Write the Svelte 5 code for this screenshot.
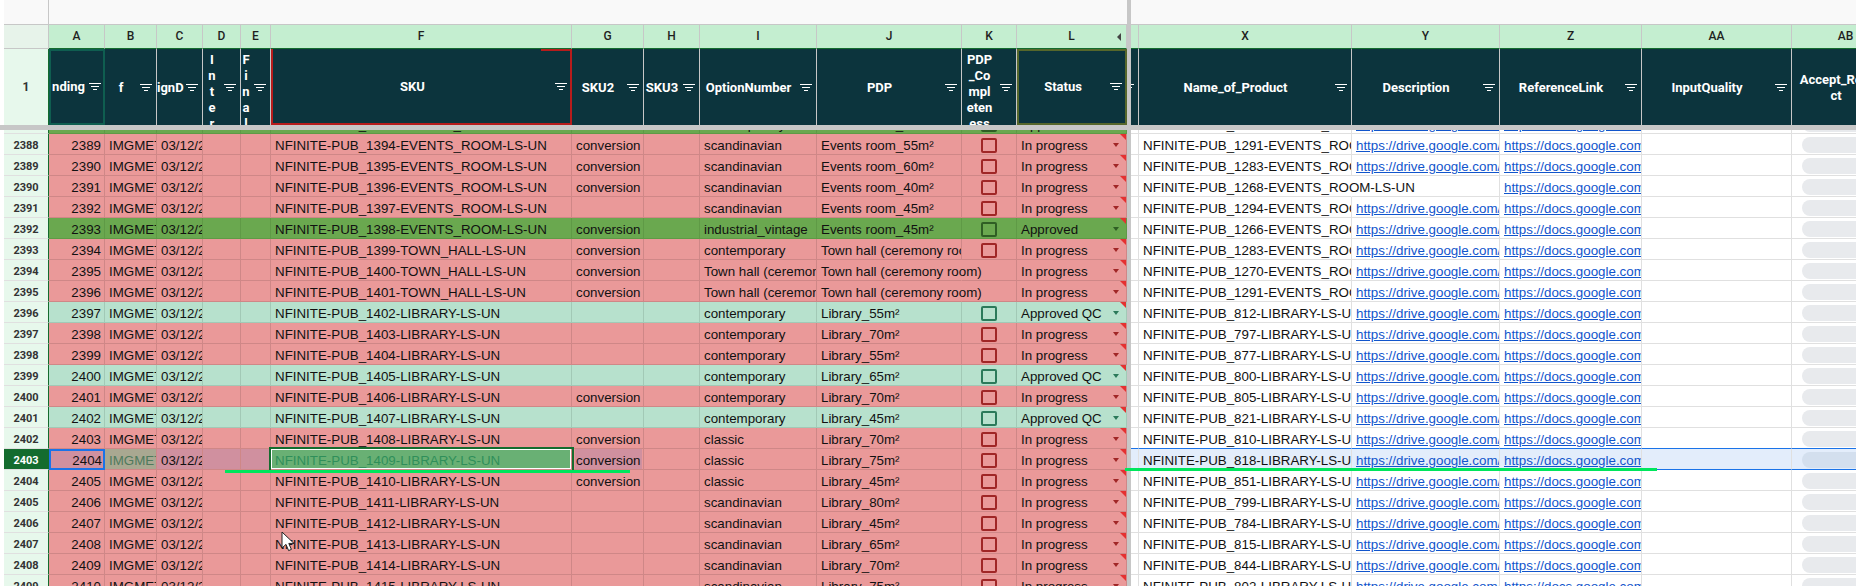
<script>
  const IP = 'In progress', AP = 'Approved', QC = 'Approved QC';
  const ev = (n) => `NFINITE-PUB_${n}-EVENTS_ROOM-LS-UN`;
  const th = (n) => `NFINITE-PUB_${n}-TOWN_HALL-LS-UN`;
  const li = (n) => `NFINITE-PUB_${n}-LIBRARY-LS-UN`;
  const TH = 'Town hall (ceremony room)';
  const conv = 'conversion';

  const raw = [
    [2387, ev(1393), conv, 'contemporary', 'Events room_55m²', AP, ev(1281)],
    [2388, ev(1394), conv, 'scandinavian', 'Events room_55m²', IP, ev(1291)],
    [2389, ev(1395), conv, 'scandinavian', 'Events room_60m²', IP, ev(1283)],
    [2390, ev(1396), conv, 'scandinavian', 'Events room_40m²', IP, ev(1268), { noDesc: true }],
    [2391, ev(1397), '', 'scandinavian', 'Events room_45m²', IP, ev(1294)],
    [2392, ev(1398), conv, 'industrial_vintage', 'Events room_45m²', AP, ev(1266)],
    [2393, th(1399), conv, 'contemporary', TH, IP, ev(1283)],
    [2394, th(1400), conv, TH, TH, IP, ev(1270), { noCheck: true }],
    [2395, th(1401), conv, TH, TH, IP, ev(1291), { noCheck: true }],
    [2396, li(1402), '', 'contemporary', 'Library_55m²', QC, li(812)],
    [2397, li(1403), '', 'contemporary', 'Library_70m²', IP, li(797)],
    [2398, li(1404), '', 'contemporary', 'Library_55m²', IP, li(877)],
    [2399, li(1405), '', 'contemporary', 'Library_65m²', QC, li(800)],
    [2400, li(1406), conv, 'contemporary', 'Library_70m²', IP, li(805)],
    [2401, li(1407), '', 'contemporary', 'Library_45m²', QC, li(821)],
    [2402, li(1408), conv, 'classic', 'Library_70m²', IP, li(810)],
    [2403, li(1409), conv, 'classic', 'Library_75m²', IP, li(818), { sel: true }],
    [2404, li(1410), conv, 'classic', 'Library_45m²', IP, li(851)],
    [2405, li(1411), '', 'scandinavian', 'Library_80m²', IP, li(799)],
    [2406, li(1412), '', 'scandinavian', 'Library_45m²', IP, li(784)],
    [2407, li(1413), '', 'scandinavian', 'Library_65m²', IP, li(815)],
    [2408, li(1414), '', 'scandinavian', 'Library_70m²', IP, li(844)],
    [2409, li(1415), '', 'scandinavian', 'Library_75m²', IP, li(802)]
  ];
  const rows = raw.map(([n, sku, g, i, j, status, x, o]) => ({
    n, sku, g, i, j, status, x, ...(o || {}),
    tone: status === IP ? 'pink' : status === AP ? 'green' : 'teal'
  }));

  const left = [
    { l: 'A', t: ['nding'], c: 'selA' },
    { l: 'B', t: ['f'] },
    { l: 'C', t: ['ignD'] },
    { l: 'D', t: ['I', 'n', 't', 'e', 'r'], tall: true },
    { l: 'E', t: ['F', 'i', 'n', 'a', 'l'], tall: true },
    { l: 'F', t: ['SKU'], c: 'selF' },
    { l: 'G', t: ['SKU2'] },
    { l: 'H', t: ['SKU3'] },
    { l: 'I', t: ['OptionNumber'] },
    { l: 'J', t: ['PDP'] },
    { l: 'K', t: ['PDP', '_Co', 'mpl', 'eten', 'ess'], tall: true },
    { l: 'L', t: ['Status'], c: 'selL', arrow: true }
  ];
  const right = [
    { l: 'X', t: ['Name_of_Product'] },
    { l: 'Y', t: ['Description'] },
    { l: 'Z', t: ['ReferenceLink'] },
    { l: 'AA', t: ['InputQuality'] },
    { l: 'AB', t: ['Accept_Reje', 'ct'] }
  ];
</script>

{#snippet filter(cls = '')}
  <svg class="filter {cls}" width="12" height="8" viewBox="0 0 12 8">
    <path d="M0 .5h12M2 3.5h8M4 6.5h4" stroke="#fff" stroke-width="1" fill="none" />
  </svg>
{/snippet}

{#snippet head(c)}
  <div class="hc {c.c || ''}">
    <div class="label" class:tall={c.tall}>
      {#each c.t as line}<span>{line}</span>{/each}
    </div>
    {@render filter()}
  </div>
{/snippet}

<div class="sheet">
  <div class="r top">
    <div class="gut"></div>
    <div class="tc corner"></div>
    <div class="tc wideL"></div>
    <div class="div"></div>
    <div class="tc wideR"></div>
  </div>

  <div class="r letters">
    <div class="gut"></div>
    <div class="lc corner2"></div>
    {#each left as c}
      <div class="lc">{c.l}{#if c.arrow}<i class="back"></i>{/if}</div>
    {/each}
    <div class="div"></div>
    <div class="lc"></div>
    {#each right as c}<div class="lc">{c.l}</div>{/each}
  </div>

  <div class="r headers">
    <div class="gut"></div>
    <div class="rh one">1</div>
    {#each left as c}{@render head(c)}{/each}
    <div class="div"></div>
    <div class="hc stub">{@render filter('tail')}</div>
    {#each right as c}{@render head(c)}{/each}
  </div>

  <div class="bar"></div>

  <div class="body">
    {#each rows as row}
      <div class="r data {row.tone}" class:sel={row.sel}>
        <div class="gut"></div>
        <div class="rh">{row.n}</div>
        <div class="c num cA">{row.n + 1}</div>
        <div class="c cB">IMGMETA</div>
        <div class="c cC">03/12/2025</div>
        <div class="c cD"></div>
        <div class="c cE"></div>
        <div class="c cF">{row.sku}</div>
        <div class="c cG"><span>{row.g}</span></div>
        <div class="c"></div>
        <div class="c">{row.i}</div>
        <div class="c" class:over={row.noCheck}>{row.j}</div>
        <div class="c chk">{#if !row.noCheck}<i class="box"></i>{/if}</div>
        <div class="c st">{row.status}<i class="drop"></i><i class="flag"></i></div>
        <div class="div"></div>
        <div class="w"></div>
        <div class="w" class:over={row.noDesc}>{row.x}</div>
        <div class="w">{#if !row.noDesc}<a href="#y">https://drive.google.com/drive/folders</a>{/if}</div>
        <div class="w"><a href="#z">https://docs.google.com/document/d</a></div>
        <div class="w"></div>
        <div class="w pillc"><i class="pill"></i></div>
      </div>
    {/each}
  </div>

  <i class="gline g1"></i>
  <i class="gline g2"></i>

  <svg class="cursor" width="14" height="21" viewBox="0 0 14 21">
    <path d="M1 1v16l4-3.6 2.6 6.2 2.8-1.2-2.6-6H13z" fill="#fff" stroke="#222" stroke-width="1" />
  </svg>
</div>

<style>
  :global(body) { margin: 0; background: #fff; }
  .sheet {
    position: relative;
    width: 1856px;
    height: 586px;
    overflow: hidden;
    font-family: Roboto, "Liberation Sans", sans-serif;
    font-size: 13px;
    color: #111;
  }
  .r {
    display: grid;
    grid-template-columns: 4px 45px 56px 52px 46px 38px 30px 301px 72px 56px 117px 145px 55px 110px 4px 8px 213px 148px 142px 150px 108px;
    width: 1900px;
  }
  .gut { background: #fff; }
  .div { background: #c7c7c7; position: relative; z-index: 3; }

  .top { height: 25px; }
  .tc { background: #f9f9f9; border-bottom: 1px solid #c7c7c7; }
  .top .corner { border-right: 1px solid #c7c7c7; }
  .wideL { grid-column: span 12; }
  .wideR { grid-column: span 6; }

  .letters { height: 24px; }
  .lc {
    position: relative;
    display: flex;
    align-items: center;
    justify-content: center;
    box-sizing: border-box;
    background: #c4eed0;
    border-right: 1px solid #c7c7c7;
    border-bottom: 1px solid #146c2e;
    padding-bottom: 2px;
    font-size: 12px;
    font-weight: 500;
    color: #1f1f1f;
  }
  .corner2 { background: #e7f3ea; border-bottom-color: #c7c7c7; }
  .back {
    position: absolute;
    right: 5px;
    top: 8px;
    border-style: solid;
    border-width: 4px 4px 4px 0;
    border-color: transparent #444 transparent transparent;
  }

  .headers { height: 76px; }
  .rh {
    display: flex;
    align-items: center;
    justify-content: center;
    background: #e7f8ec;
    border-right: 1px solid #146c2e;
    border-bottom: 1px solid #dcdcdc;
    box-sizing: border-box;
    font-size: 11px;
    font-weight: 700;
    color: #333;
  }
  .one { font-size: 12px; border-bottom: 0; }
  .hc {
    display: flex;
    align-items: center;
    min-width: 0;
    overflow: hidden;
    box-sizing: border-box;
    background: #0c343d;
    border-right: 1px solid #c7c7c7;
    color: #fff;
    font-weight: 700;
    font-size: 13px;
    line-height: 16px;
    padding-top: 2px;
  }
  .selA { border: 2px solid #0f5e50; padding-top: 0; }
  .selA .filter { margin-right: 2px; }
  .selF {
    border: 2px solid #b71c1c;
    border-top: 0;
    padding-top: 2px;
    background: linear-gradient(90deg, #0c343d calc(100% - 29px), #b71c1c 0) top / 100% 2px no-repeat, #0c343d;
  }
  .selL { border: 2px solid #56672b; padding-top: 0; }
  .label {
    flex: 1;
    min-width: 0;
    overflow: hidden;
    white-space: nowrap;
    text-align: center;
    padding-right: 3px;
  }
  .label span { display: block; }
  .label.tall { align-self: flex-start; padding-top: 1px; }
  .filter { flex: none; margin-right: 4px; }
  .selF .filter, .selL .filter { margin-right: 3px; }
  .stub { overflow: hidden; }
  .tail { margin-left: -9px; }

  .bar { height: 5px; background: #c7c7c7; position: relative; z-index: 2; }
  .body {
    height: 456px;
    overflow: hidden;
  }
  .body .r:first-child { margin-top: -17px; }
  .data { height: 21px; }
  .data .rh { border-bottom-color: #e0e0e0; padding-top: 2px; }
  .c, .w {
    box-sizing: border-box;
    height: 21px;
    padding: 0 3px 0 4px;
    font-family: "Liberation Sans", Arial, sans-serif;
    font-size: 13.33px;
    line-height: 23px;
    white-space: nowrap;
    overflow: hidden;
    min-width: 0;
  }
  .c { border-right: 1px solid var(--line); border-bottom: 1px solid var(--line); background: var(--bg); position: relative; }
  .w { border-right: 1px solid #e0e0e0; border-bottom: 1px solid #e0e0e0; background: #fff; }
  .over { overflow: visible; border-right-color: transparent; position: relative; z-index: 1; }
  .w a { color: #1155cc; text-decoration: underline; }
  .num { text-align: right; }

  .pink { --bg: #ea9999; --line: #cf8787; --mark: #a02626; }
  .green { --bg: #6aa84f; --line: #5f9a46; --mark: #2f5e24; }
  .teal { --bg: #b7e1cd; --line: #a2c9b6; --mark: #2b7a5a; }

  .chk { padding: 0; display: flex; justify-content: center; }
  .box {
    display: block;
    box-sizing: border-box;
    width: 16px;
    height: 15px;
    margin-top: 4px;
    border: 2px solid var(--mark);
    border-radius: 2px;
  }
  .drop {
    position: absolute;
    right: 7px;
    top: 9px;
    border-style: solid;
    border-width: 4px 3.5px 0;
    border-color: var(--mark) transparent transparent;
  }
  .flag {
    position: absolute;
    right: 0;
    top: 0;
    border-style: solid;
    border-width: 0 6px 6px 0;
    border-color: transparent #e53030 transparent transparent;
  }

  .pillc { padding: 0; }
  .pill {
    display: block;
    width: 96px;
    height: 16px;
    margin: 3px 0 0 10px;
    border-radius: 8px;
    background: #e8eaed;
  }

  .sel .rh { background: #146c2e; color: #fff; }
  .sel .cA {
    background: #d0909f;
    border: 2px solid #1a73e8;
    line-height: 19px;
    padding: 0 1px 0 4px;
  }
  .sel .cB { background: #a9a891; color: #4f7a5d; }
  .sel .cC, .sel .cD, .sel .cE { background: #d0909f; }
  .sel .cF {
    background: #69b074;
    color: #2f8f5a;
    overflow: visible;
    z-index: 2;
    outline: 2px solid #146c2e;
    box-shadow: inset 1px 1px 0 #fff, inset -1px -1px 0 #fff;
  }
  .sel .cG { padding: 0; }
  .sel .cG span {
    display: block;
    margin-left: 3px;
    width: 66px;
    padding-left: 1px;
    background: #d0909f;
  }
  .sel .w {
    background: #e3edfb;
    border-top: 1px solid #1a73e8;
    border-bottom: 1px solid #1a73e8;
    margin-top: -1px;
    height: 22px;
    line-height: 23px;
  }
  .sel .pill { background: #d3dfee; margin-top: 3px; }

  .gline { position: absolute; display: block; height: 3px; background: #00e65c; z-index: 5; }
  .g1 { left: 225px; width: 405px; top: 470px; }
  .g2 { left: 1125px; width: 532px; top: 468px; }

  .cursor { position: absolute; left: 281px; top: 531px; z-index: 6; }
</style>
